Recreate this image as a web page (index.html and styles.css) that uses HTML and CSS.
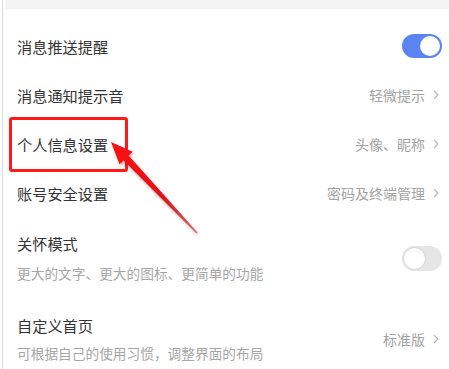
FILE: index.html
```html
<!DOCTYPE html>
<html lang="zh-CN">
<head>
<meta charset="utf-8">
<link rel="stylesheet" href="styles.css">
</head>
<body>
<div class="page">
  <div class="band"></div>
  <div class="list">
    <div class="row">
      <div class="title">消息推送提醒</div>
      <div class="switch on"><span class="knob"></span></div>
    </div>
    <div class="row">
      <div class="title">消息通知提示音</div>
      <div class="extra">轻微提示<svg class="chev" viewBox="0 0 6 10"><path d="M1 1l4 4-4 4" /></svg></div>
    </div>
    <div class="row">
      <div class="title">个人信息设置</div>
      <div class="extra">头像、昵称<svg class="chev" viewBox="0 0 6 10"><path d="M1 1l4 4-4 4" /></svg></div>
    </div>
    <div class="row">
      <div class="title">账号安全设置</div>
      <div class="extra">密码及终端管理<svg class="chev" viewBox="0 0 6 10"><path d="M1 1l4 4-4 4" /></svg></div>
    </div>
    <div class="row tall care">
      <div class="texts">
        <div class="title">关怀模式</div>
        <div class="sub">更大的文字、更大的图标、更简单的功能</div>
      </div>
      <div class="switch off"><span class="knob"></span></div>
    </div>
    <div class="row tall home">
      <div class="texts">
        <div class="title">自定义首页</div>
        <div class="sub">可根据自己的使用习惯，调整界面的布局</div>
      </div>
      <div class="extra">标准版<svg class="chev" viewBox="0 0 6 10"><path d="M1 1l4 4-4 4" /></svg></div>
    </div>
  </div>
  <div class="highlight"></div>
  <svg class="arrow" width="449" height="369" viewBox="0 0 449 369">
    <defs>
      <linearGradient id="ag" x1="111" y1="142" x2="197" y2="233" gradientUnits="userSpaceOnUse">
        <stop offset="0" stop-color="#ff1010"/>
        <stop offset="0.6" stop-color="#e01018"/>
        <stop offset="1" stop-color="#b8202a" stop-opacity="0.6"/>
      </linearGradient>
    </defs>
    <polygon points="111,142 132.7,151.8 128.6,155.6 197.6,232.4 196.4,233.6 123.6,160.4 119.5,164.2" fill="url(#ag)"/>
  </svg>
</div>
</body>
</html>
```

FILE: styles.css
```css
html, body {
  margin: 0;
  padding: 0;
  background: #ffffff;
}
.page {
  position: relative;
  width: 449px;
  height: 369px;
  overflow: hidden;
  font-family: "Noto Sans CJK SC", "Noto Sans", sans-serif;
  border-left: 1px solid #dcdcdc;
  margin-left: 2px;
  box-sizing: border-box;
}
.band {
  height: 9px;
  margin-left: 2px;
  background: #f4f4f4;
}
.list {
  padding: 12px 0 0 14px;
}
.row {
  display: flex;
  align-items: center;
  justify-content: space-between;
  height: 49px;
  padding-right: 9px;
}
.title {
  font-size: 15.2px;
  line-height: 20px;
  color: #333333;
}
.extra {
  display: flex;
  align-items: center;
  font-size: 14px;
  line-height: 20px;
  color: #a3a3a3;
}
.chev {
  width: 6px;
  height: 10px;
  margin-left: 8px;
  margin-right: 3px;
  fill: none;
  stroke: #b8b8b8;
  stroke-width: 1.2;
}
.row.tall {
  height: auto;
}
.care {
  padding-top: 16px;
  padding-bottom: 12px;
}
.home {
  padding-top: 20px;
  padding-bottom: 18px;
}
.sub {
  font-size: 13.7px;
  line-height: 20px;
  color: #a6a6a6;
}
.care .sub {
  margin-top: 10px;
}
.home .sub {
  margin-top: 8px;
}
.switch {
  position: relative;
  width: 40px;
  height: 24px;
  border-radius: 12px;
  box-sizing: border-box;
  margin-right: 0;
}
.switch.on {
  background: #5b84f2;
}
.switch.off {
  background: #e6e6e6;
  height: 25px;
}
.knob {
  position: absolute;
  top: 2px;
  width: 20px;
  height: 20px;
  border-radius: 50%;
  background: #ffffff;
}
.switch.on .knob {
  right: 2px;
}
.switch.off .knob {
  left: 1px;
  top: 1px;
  width: 21px;
  height: 21px;
  border: 1px solid #d4d4d4;
}
.highlight {
  position: absolute;
  left: 6px;
  top: 117px;
  width: 119px;
  height: 55px;
  box-sizing: border-box;
  border: 3px solid #ff1a1a;
  border-radius: 3px;
}
.arrow {
  position: absolute;
  left: -3px;
  top: 0;
  filter: drop-shadow(1px 2px 1.5px rgba(120, 0, 0, 0.35));
}
```
